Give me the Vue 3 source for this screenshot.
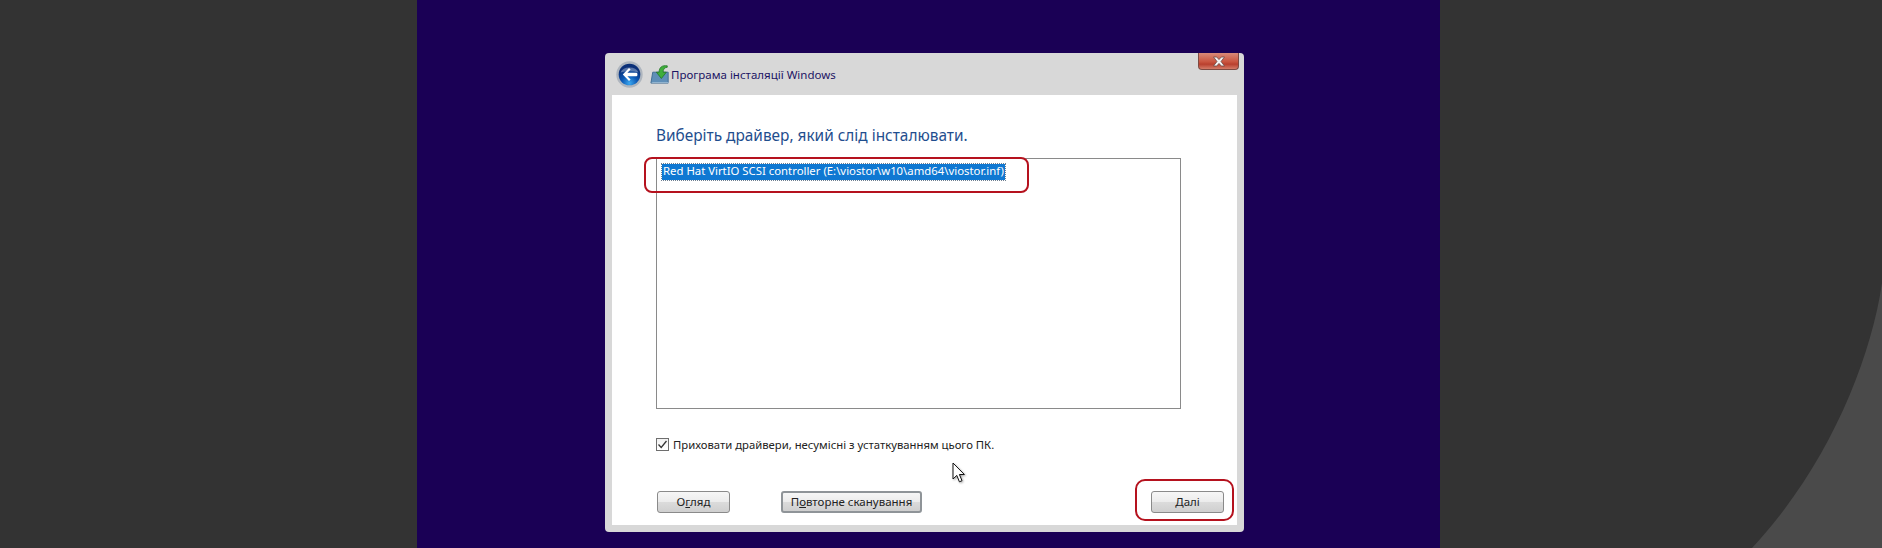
<script setup>
const driver = 'Red Hat VirtIO SCSI controller (E:\\viostor\\w10\\amd64\\viostor.inf)'
</script>

<template>
  <div class="page">
    <svg class="curve" width="1882" height="548" viewBox="0 0 1882 548" aria-hidden="true">
      <path d="M1882 283C1870 365 1825 470 1752 548L1882 548Z" fill="#4a4a4a" />
    </svg>
    <div class="stage">
      <section class="window">
        <header class="titlebar">
          <svg class="back" width="27" height="27" viewBox="0 0 27 27" aria-hidden="true">
            <defs>
              <radialGradient id="orb" cx="50%" cy="90%" r="72%">
                <stop offset="0" stop-color="#3aa8f0" />
                <stop offset="0.5" stop-color="#0c58b4" />
                <stop offset="1" stop-color="#0a2f78" />
              </radialGradient>
            </defs>
            <circle cx="13.5" cy="13.5" r="13.2" fill="#aeb5be" />
            <circle cx="13.5" cy="13.5" r="10.8" fill="url(#orb)" />
            <path d="M4.5 11.5a9.5 7.5 0 0 1 18 0c-6-1.8-12-1.8-18 0Z" fill="#fff" opacity="0.32" />
            <path d="M13 7 6.8 13.5l6.2 6.5 1.6-1.6-3.2-3.1h8.8a1.2 1.2 0 0 0 1.2-1.2v-1.2a1.2 1.2 0 0 0-1.2-1.2h-8.8l3.2-3.1Z" fill="#fff" />
          </svg>
          <svg class="setup" width="20" height="20" viewBox="0 0 22 22" aria-hidden="true">
            <path d="M3 9h17v12H1Z" fill="#5f8fb8" stroke="#3d6a92" />
            <path d="M1 21h19l1-1H3Z" fill="#a9c6dc" />
            <path d="M19 2c-6-1-9 2-9 7H7l5.5 7L18 9h-3.5c0-3 1-5 4.5-5.4Z" fill="#3fae3c" stroke="#1d7322" stroke-width="0.8" />
          </svg>
          <span class="title">Програма інсталяції Windows</span>
          <button class="close" type="button" aria-label="Закрити">
            <svg width="14" height="11" viewBox="0 0 14 11" aria-hidden="true">
              <path d="M1.5 1h3.2L7 3.6 9.3 1h3.2L9 5.5l3.5 4.5H9.3L7 7.4 4.7 10H1.5L5 5.5Z" fill="#f4f4f4" stroke="#6b4a45" stroke-width="0.8" />
            </svg>
          </button>
        </header>
        <div class="panel">
          <h1 class="heading">Виберіть драйвер, який слід інсталювати.</h1>
          <div class="list">
            <span class="item">{{ driver }}</span>
          </div>
          <label class="check">
            <span class="box">
              <svg width="13" height="13" viewBox="0 0 13 13" aria-hidden="true">
                <path d="M2.5 6.5 5.2 9.5 10.5 3" fill="none" stroke="#333" stroke-width="1.3" />
              </svg>
            </span>
            <span>Приховати драйвери, несумісні з устаткуванням цього ПК.</span>
          </label>
          <div class="actions">
            <button class="btn" type="button">О<u>г</u>ляд</button>
            <button class="btn btn-default" type="button">П<u>о</u>вторне сканування</button>
            <button class="btn btn-next" type="button"><u>Д</u>алі</button>
          </div>
          <span class="mark mark-list"></span>
          <span class="mark mark-next"></span>
          <svg class="pointer" width="14" height="22" viewBox="0 0 14 22" aria-hidden="true">
            <path d="M1 1v16l3.8-3.6 2.6 6.4 2.6-1.1-2.6-6.2h5Z" fill="#fff" stroke="#111" stroke-width="1" />
          </svg>
        </div>
      </section>
    </div>
  </div>
</template>

<style scoped>
.page {
  position: relative;
  width: 1882px;
  height: 548px;
  overflow: hidden;
  background: #333333;
  font-family: "Noto Sans", "Open Sans", sans-serif;
}
.curve {
  position: absolute;
  inset: 0;
}
.stage {
  position: relative;
  width: 1023px;
  height: 548px;
  margin-left: 417px;
  padding: 53px 0 0 188px;
  box-sizing: border-box;
  background: #1a0055;
}
.window {
  width: 639px;
  height: 479px;
  display: flex;
  flex-direction: column;
  padding: 0 7px 7px;
  box-sizing: border-box;
  background: #d8d8d8;
  border-radius: 4px;
}
.titlebar {
  position: relative;
  height: 42px;
  flex: none;
  display: flex;
  align-items: center;
  font-size: 12px;
}
.back {
  margin-left: 4px;
  margin-top: 1px;
}
.setup {
  margin-left: 7px;
}
.title {
  margin-left: 1px;
  color: #1c1464;
  font-size: 11.5px;
}
.close {
  position: absolute;
  top: 0;
  right: -2px;
  width: 41px;
  height: 17px;
  padding: 0;
  display: flex;
  align-items: center;
  justify-content: center;
  border: 1px solid #7d4a42;
  border-top: 0;
  border-radius: 0 0 4px 4px;
  background: linear-gradient(#d98a78, #c9543f 55%, #b9402e 70%, #d47c68);
}
.panel {
  position: relative;
  flex: 1;
  display: flex;
  flex-direction: column;
  background: #fff;
  padding: 30px 13px 0 44px;
}
.heading {
  margin: 0;
  font-size: 15.4px;
  line-height: 22px;
  font-weight: 400;
  color: #1f4e8e;
}
.list {
  width: 525px;
  height: 251px;
  margin-top: 11px;
  padding: 5px;
  box-sizing: border-box;
  border: 1px solid #8a8a8a;
  background: #fff;
}
.item {
  display: block;
  width: fit-content;
  height: 16px;
  line-height: 13px;
  padding: 0 1px;
  font-size: 11.35px;
  color: #fff;
  background: #0f78d2;
  outline: 1px dotted #6f7f90;
  white-space: nowrap;
}
.check {
  display: flex;
  align-items: center;
  gap: 4px;
  height: 16px;
  margin-top: 27px;
  font-size: 11.3px;
  color: #222;
}
.box {
  width: 13px;
  height: 13px;
  flex: none;
  display: block;
  box-sizing: border-box;
  border: 1px solid #6e6e6e;
  background: linear-gradient(#f2f2f2, #fff);
}
.box svg {
  display: block;
  margin: -1px;
}
.actions {
  display: flex;
  gap: 51px;
  margin-top: 39px;
  padding-left: 1px;
}
.btn {
  width: 73px;
  height: 22px;
  padding: 0;
  font: inherit;
  font-size: 11.5px;
  line-height: 18px;
  color: #222;
  border: 1px solid #8a8a8a;
  border-radius: 3px;
  background: linear-gradient(#f6f6f6, #ececec 48%, #dbdbdb 52%, #cfcfcf);
}
.btn-default {
  width: 141px;
  border: 2px solid #8f9498;
}
.btn-next {
  margin-left: auto;
  margin-right: 0;
}
.mark {
  position: absolute;
  box-sizing: border-box;
  border: 2px solid #b5121e;
  border-radius: 8px;
}
.mark-list {
  left: 32px;
  top: 62px;
  width: 385px;
  height: 36px;
}
.mark-next {
  left: 523px;
  top: 384px;
  width: 99px;
  height: 42px;
  border-radius: 10px;
}
.pointer {
  position: absolute;
  left: 340px;
  top: 367px;
  filter: drop-shadow(1px 1px 1px rgba(0, 0, 0, 0.35));
}
</style>

<style>
html, body {
  margin: 0;
  background: #333333;
}
</style>
